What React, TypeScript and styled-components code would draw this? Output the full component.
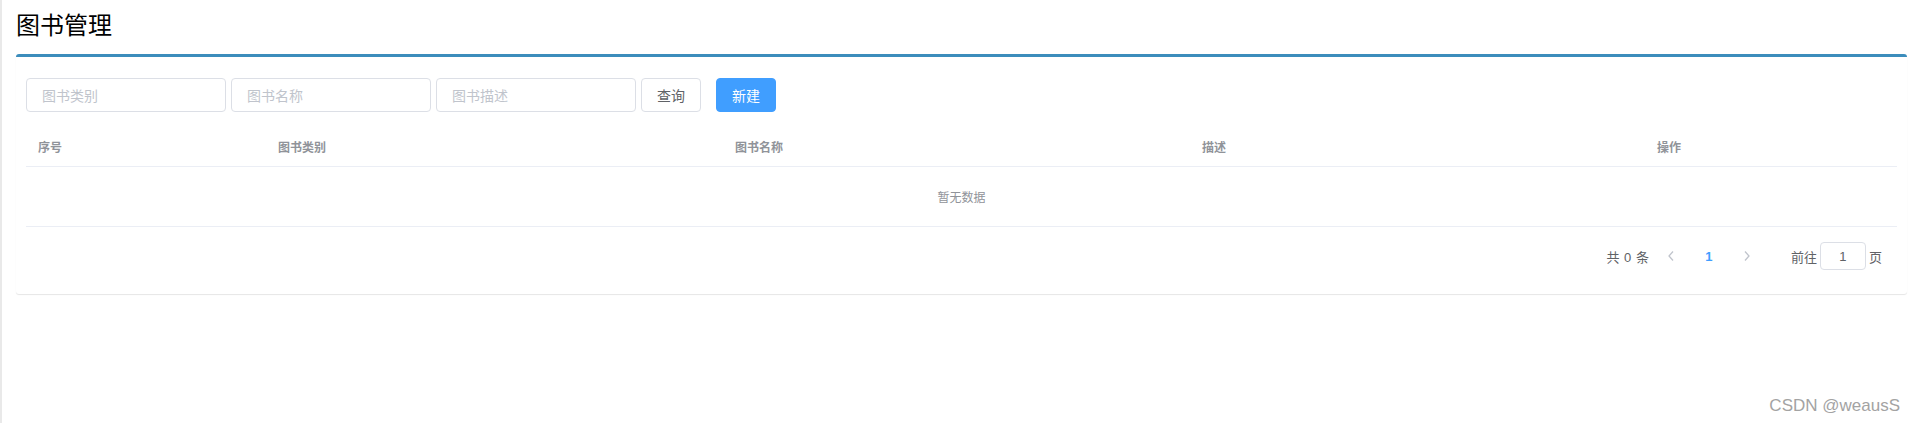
import React from "react";
import styled, { createGlobalStyle } from "styled-components";

const GlobalStyle = createGlobalStyle`
  html, body { margin: 0; padding: 0; background: #ffffff; }
  body {
    font-family: "Noto Sans CJK SC", "Liberation Sans", sans-serif;
    color: #606266;
  }
  * { box-sizing: border-box; }
`;

const Page = styled.div`
  position: relative;
  min-height: 100vh;
  border-left: 2px solid #e9e9e9;
  padding: 7px 8px 0 14px;
`;

const Title = styled.h1`
  margin: 0 0 13px 0;
  font-size: 24px;
  line-height: 34px;
  font-weight: 400;
  color: #000000;
`;

const Card = styled.section`
  background: #ffffff;
  border-top: 3px solid #3c8dbc;
  border-radius: 3px;
  box-shadow: 0 1px 1px rgba(0, 0, 0, 0.1);
  padding: 21px 10px 24px 10px;
`;

const Toolbar = styled.div`
  display: flex;
  align-items: center;
  gap: 5px;
  margin-bottom: 15px;
`;

const SearchInput = styled.input`
  width: 200px;
  height: 34px;
  border: 1px solid #dcdfe6;
  border-radius: 4px;
  padding: 0 15px;
  font-family: inherit;
  font-size: 14px;
  color: #606266;
  outline: none;
  &::placeholder { color: #c0c4cc; }
`;

const Button = styled.button<{ $primary?: boolean }>`
  width: 60px;
  height: 34px;
  border-radius: 4px;
  font-family: inherit;
  font-size: 14px;
  cursor: pointer;
  margin-left: ${(p) => (p.$primary ? "10px" : "0")};
  border: 1px solid ${(p) => (p.$primary ? "#409eff" : "#dcdfe6")};
  background: ${(p) => (p.$primary ? "#409eff" : "#ffffff")};
  color: ${(p) => (p.$primary ? "#ffffff" : "#606266")};
`;

const Table = styled.div`
  width: 100%;
`;

const HeaderRow = styled.div`
  display: grid;
  grid-template-columns: 240px 457px 467px 455px 1fr;
  height: 40px;
  align-items: center;
  border-bottom: 1px solid #ebeef5;
`;

const HeaderCell = styled.div`
  padding: 0 12px;
  font-size: 12px;
  font-weight: 700;
  color: #909399;
`;

const EmptyRow = styled.div`
  height: 60px;
  display: flex;
  align-items: center;
  justify-content: center;
  font-size: 12px;
  color: #909399;
  border-bottom: 1px solid #ebeef5;
`;

const Pagination = styled.div`
  margin-top: 15px;
  height: 28px;
  display: flex;
  align-items: center;
  justify-content: flex-end;
  padding-right: 15px;
  font-family: "Liberation Sans", "Noto Sans CJK SC", sans-serif;
  font-size: 13px;
  color: #606266;
`;

const Total = styled.span`
  margin-right: 4px;
  word-spacing: 1px;
`;

const ArrowButton = styled.button`
  width: 36px;
  height: 28px;
  border: none;
  background: transparent;
  padding: 0;
  display: flex;
  align-items: center;
  justify-content: center;
  color: #c0c4cc;
`;

const PageNumber = styled.span<{ $active?: boolean }>`
  width: 40px;
  text-align: center;
  font-weight: 700;
  color: ${(p) => (p.$active ? "#409eff" : "#606266")};
`;

const Jump = styled.span`
  margin-left: 26px;
  display: flex;
  align-items: center;
`;

const JumpInput = styled.input`
  width: 46px;
  height: 28px;
  margin: 0 3px;
  border: 1px solid #dcdfe6;
  border-radius: 4px;
  text-align: center;
  font-family: "Liberation Sans", sans-serif;
  font-size: 13px;
  color: #606266;
  outline: none;
`;

const Watermark = styled.div`
  position: absolute;
  right: 15px;
  bottom: 7px;
  font-family: "Liberation Sans", sans-serif;
  font-size: 17px;
  color: #a3a3a3;
  text-shadow: 0 0 1px #ffffff;
`;

const Chevron = ({ dir }: { dir: "left" | "right" }) => (
  <svg width="8" height="12" viewBox="0 0 8 12" fill="none">
    <path
      d={dir === "left" ? "M6 1.5 L2 6 L6 10.5" : "M2 1.5 L6 6 L2 10.5"}
      stroke="currentColor"
      strokeWidth="1.3"
    />
  </svg>
);

const columns = ["序号", "图书类别", "图书名称", "描述", "操作"];

export default function App() {
  return (
    <>
      <GlobalStyle />
      <Page>
        <Title>图书管理</Title>
        <Card>
          <Toolbar>
            <SearchInput placeholder="图书类别" />
            <SearchInput placeholder="图书名称" />
            <SearchInput placeholder="图书描述" />
            <Button>查询</Button>
            <Button $primary>新建</Button>
          </Toolbar>
          <Table>
            <HeaderRow>
              {columns.map((c) => (
                <HeaderCell key={c}>{c}</HeaderCell>
              ))}
            </HeaderRow>
            <EmptyRow>暂无数据</EmptyRow>
          </Table>
          <Pagination>
            <Total>共 0 条</Total>
            <ArrowButton aria-label="上一页">
              <Chevron dir="left" />
            </ArrowButton>
            <PageNumber $active>1</PageNumber>
            <ArrowButton aria-label="下一页">
              <Chevron dir="right" />
            </ArrowButton>
            <Jump>
              前往
              <JumpInput defaultValue="1" />页
            </Jump>
          </Pagination>
        </Card>
        <Watermark>CSDN @weausS</Watermark>
      </Page>
    </>
  );
}
